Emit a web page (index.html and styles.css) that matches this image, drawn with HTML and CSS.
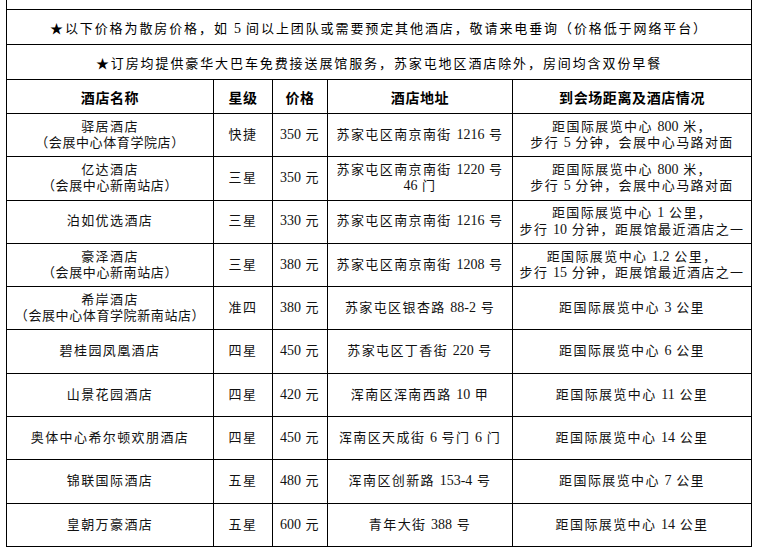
FILE: index.html
```html
<!DOCTYPE html>
<html lang="zh-CN">
<head>
<meta charset="utf-8">
<title>酒店价格</title>
<link rel="stylesheet" href="styles.css">
</head>
<body>
<table class="hotels">
  <colgroup>
    <col class="c-name"><col class="c-star"><col class="c-price"><col class="c-addr"><col class="c-dist">
  </colgroup>
  <tr class="top"><td colspan="5"></td></tr>
  <tr class="note"><td colspan="5">★以下价格为散房价格，如 <span class="num">5</span> 间以上团队或需要预定其他酒店，敬请来电垂询（价格低于网络平台）</td></tr>
  <tr class="note"><td colspan="5">★订房均提供豪华大巴车免费接送展馆服务，苏家屯地区酒店除外，房间均含双份早餐</td></tr>
  <tr class="head">
    <th>酒店名称</th><th>星级</th><th>价格</th><th>酒店地址</th><th>到会场距离及酒店情况</th>
  </tr>
  <tr class="row">
    <td>驿居酒店<br><span class="sub">（会展中心体育学院店）</span></td><td>快捷</td><td><span class="num">350</span> 元</td><td>苏家屯区南京南街 <span class="num">1216</span> 号</td><td>距国际展览中心 <span class="num">800</span> 米，<br>步行 <span class="num">5</span> 分钟，会展中心马路对面</td>
  </tr>
  <tr class="row">
    <td>亿达酒店<br><span class="sub">（会展中心新南站店）</span></td><td>三星</td><td><span class="num">350</span> 元</td><td>苏家屯区南京南街 <span class="num">1220</span> 号<br><span class="num">46</span> 门</td><td>距国际展览中心 <span class="num">800</span> 米，<br>步行 <span class="num">5</span> 分钟，会展中心马路对面</td>
  </tr>
  <tr class="row">
    <td>泊如优选酒店</td><td>三星</td><td><span class="num">330</span> 元</td><td>苏家屯区南京南街 <span class="num">1216</span> 号</td><td>距国际展览中心 <span class="num">1</span> 公里，<br>步行 <span class="num">10</span> 分钟，距展馆最近酒店之一</td>
  </tr>
  <tr class="row">
    <td>豪泽酒店<br><span class="sub">（会展中心新南站店）</span></td><td>三星</td><td><span class="num">380</span> 元</td><td>苏家屯区南京南街 <span class="num">1208</span> 号</td><td>距国际展览中心 <span class="num">1.2</span> 公里，<br>步行 <span class="num">15</span> 分钟，距展馆最近酒店之一</td>
  </tr>
  <tr class="row">
    <td>希岸酒店<br><span class="sub">（会展中心体育学院新南站店）</span></td><td>准四</td><td><span class="num">380</span> 元</td><td>苏家屯区银杏路 <span class="num">88-2</span> 号</td><td>距国际展览中心 <span class="num">3</span> 公里</td>
  </tr>
  <tr class="row">
    <td>碧桂园凤凰酒店</td><td>四星</td><td><span class="num">450</span> 元</td><td>苏家屯区丁香街 <span class="num">220</span> 号</td><td>距国际展览中心 <span class="num">6</span> 公里</td>
  </tr>
  <tr class="row">
    <td>山景花园酒店</td><td>四星</td><td><span class="num">420</span> 元</td><td>浑南区浑南西路 <span class="num">10</span> 甲</td><td>距国际展览中心 <span class="num">11</span> 公里</td>
  </tr>
  <tr class="row">
    <td>奥体中心希尔顿欢朋酒店</td><td>四星</td><td><span class="num">450</span> 元</td><td>浑南区天成街 <span class="num">6</span> 号门 <span class="num">6</span> 门</td><td>距国际展览中心 <span class="num">14</span> 公里</td>
  </tr>
  <tr class="row">
    <td>锦联国际酒店</td><td>五星</td><td><span class="num">480</span> 元</td><td>浑南区创新路 <span class="num">153-4</span> 号</td><td>距国际展览中心 <span class="num">7</span> 公里</td>
  </tr>
  <tr class="row">
    <td>皇朝万豪酒店</td><td>五星</td><td><span class="num">600</span> 元</td><td>青年大街 <span class="num">388</span> 号</td><td>距国际展览中心 <span class="num">14</span> 公里</td>
  </tr>
</table>
</body>
</html>
```
FILE: styles.css
```css
html, body {
  margin: 0;
  padding: 0;
  background: #fff;
}
body {
  font-family: "Liberation Serif", "Noto Sans CJK SC", serif;
  color: #111;
}
.hotels {
  border-collapse: collapse;
  table-layout: fixed;
  width: 745px;
  margin-left: 6px;
}
.c-name { width: 207px; }
.c-star { width: 59px; }
.c-price { width: 55px; }
.c-addr { width: 185px; }
.c-dist { width: 239px; }
.hotels td, .hotels th {
  border: 1px solid #000;
  text-align: center;
  vertical-align: middle;
  padding: 0;
  white-space: nowrap;
  overflow: hidden;
}
.top td {
  border-top: none;
  height: 9px;
}
.note td {
  height: 34px;
  font-size: 13px;
  letter-spacing: 1.9px;
  color: #000;
}
.head th {
  height: 33px;
  font-size: 14px;
  font-weight: bold;
  letter-spacing: 0.6px;
  color: #000;
}
.row td {
  height: 42.3px;
  font-size: 13px;
  letter-spacing: 1.4px;
  line-height: 16.5px;
}
.row td .sub {
  letter-spacing: 0.6px;
}
.num {
  font-size: 14px;
  letter-spacing: 0;
}
```
